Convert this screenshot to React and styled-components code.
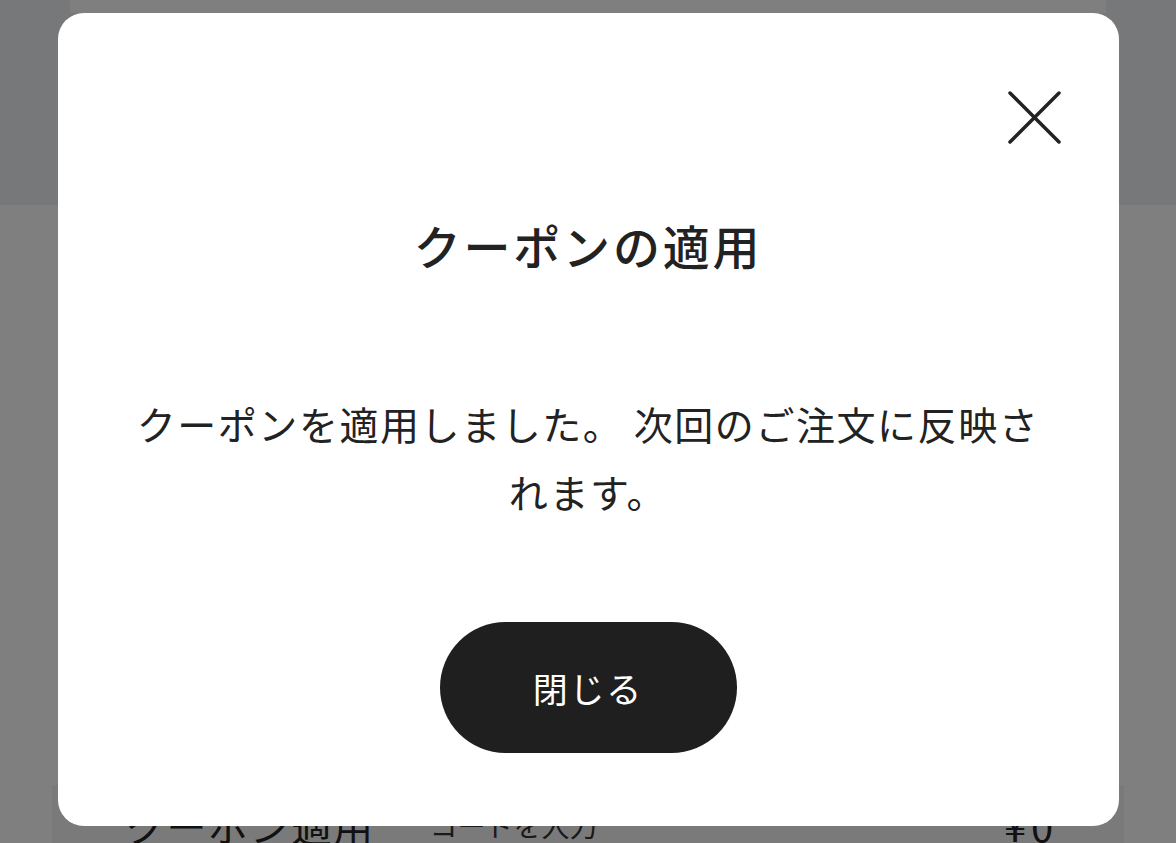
import React from "react";
import styled, { createGlobalStyle } from "styled-components";

const GlobalStyle = createGlobalStyle`
  html, body {
    margin: 0;
    padding: 0;
    background: #ffffff;
    font-family: "Noto Sans CJK JP", "Noto Sans", sans-serif;
    color: #222222;
  }
  * { box-sizing: border-box; }
`;

const Page = styled.div`
  width: 1176px;
  height: 843px;
  overflow: hidden;
  background: #ffffff;
`;

const Header = styled.header`
  height: 205px;
  background: #eef0f4;
  padding: 0 70px;
`;

const HeaderStrip = styled.div`
  height: 13px;
  background: #ffffff;
`;

const Summary = styled.section`
  padding: 580px 52px 0;
`;

const CouponRow = styled.div`
  display: flex;
  align-items: center;
  height: 80px;
  padding: 0 66px 0 73px;
  background: #f4f5f7;
`;

const RowLabel = styled.span`
  font-size: 40px;
  letter-spacing: 0.04em;
  margin-right: 55px;
`;

const RowInput = styled.span`
  font-size: 28px;
  color: #333;
  flex: 1;
`;

const RowPrice = styled.span`
  font-size: 40px;
  letter-spacing: 0.12em;
`;

const Overlay = styled.div`
  position: fixed;
  inset: 0;
  background: rgba(0, 0, 0, 0.5);
  display: flex;
  justify-content: center;
  align-items: flex-start;
  padding-top: 13px;
`;

const Modal = styled.div`
  width: 1061px;
  height: 813px;
  background: #ffffff;
  border-radius: 26px;
  padding: 78px 58px 0 58px;
  display: flex;
  flex-direction: column;
  align-items: center;
`;

const CloseRow = styled.div`
  width: 100%;
  display: flex;
  justify-content: flex-end;
`;

const CloseButton = styled.button`
  width: 53px;
  height: 53px;
  padding: 0;
  border: none;
  background: none;
  cursor: pointer;
  display: flex;
`;

const Title = styled.h2`
  margin: 66px 0 0;
  font-size: 47px;
  line-height: 69px;
  font-weight: 500;
  letter-spacing: 0.06em;
  color: #222;
`;

const Message = styled.p`
  margin: 110px 0 0;
  max-width: 925px;
  font-size: 39px;
  line-height: 68px;
  letter-spacing: 0.04em;
  text-align: center;
  color: #222;
`;

const CloseAction = styled.button`
  margin: 97px 0 0;
  width: 297px;
  height: 131px;
  border: none;
  border-radius: 66px;
  background: #1f1f1f;
  color: #ffffff;
  font-family: inherit;
  font-size: 35px;
  letter-spacing: 0.05em;
  cursor: pointer;
`;

const CloseIcon = () => (
  <svg width="53" height="53" viewBox="0 0 53 53" fill="none">
    <path
      d="M2 2L51 51M51 2L2 51"
      stroke="#222"
      strokeWidth="3.5"
      strokeLinecap="round"
    />
  </svg>
);

export default function App() {
  return (
    <>
      <GlobalStyle />
      <Page>
        <Header>
          <HeaderStrip />
        </Header>
        <Summary>
          <CouponRow>
            <RowLabel>クーポン適用</RowLabel>
            <RowInput>コードを入力</RowInput>
            <RowPrice>¥0</RowPrice>
          </CouponRow>
        </Summary>
      </Page>
      <Overlay>
        <Modal>
          <CloseRow>
            <CloseButton aria-label="閉じる">
              <CloseIcon />
            </CloseButton>
          </CloseRow>
          <Title>クーポンの適用</Title>
          <Message>
            クーポンを適用しました。 次回のご注文に反映されます。
          </Message>
          <CloseAction>閉じる</CloseAction>
        </Modal>
      </Overlay>
    </>
  );
}
